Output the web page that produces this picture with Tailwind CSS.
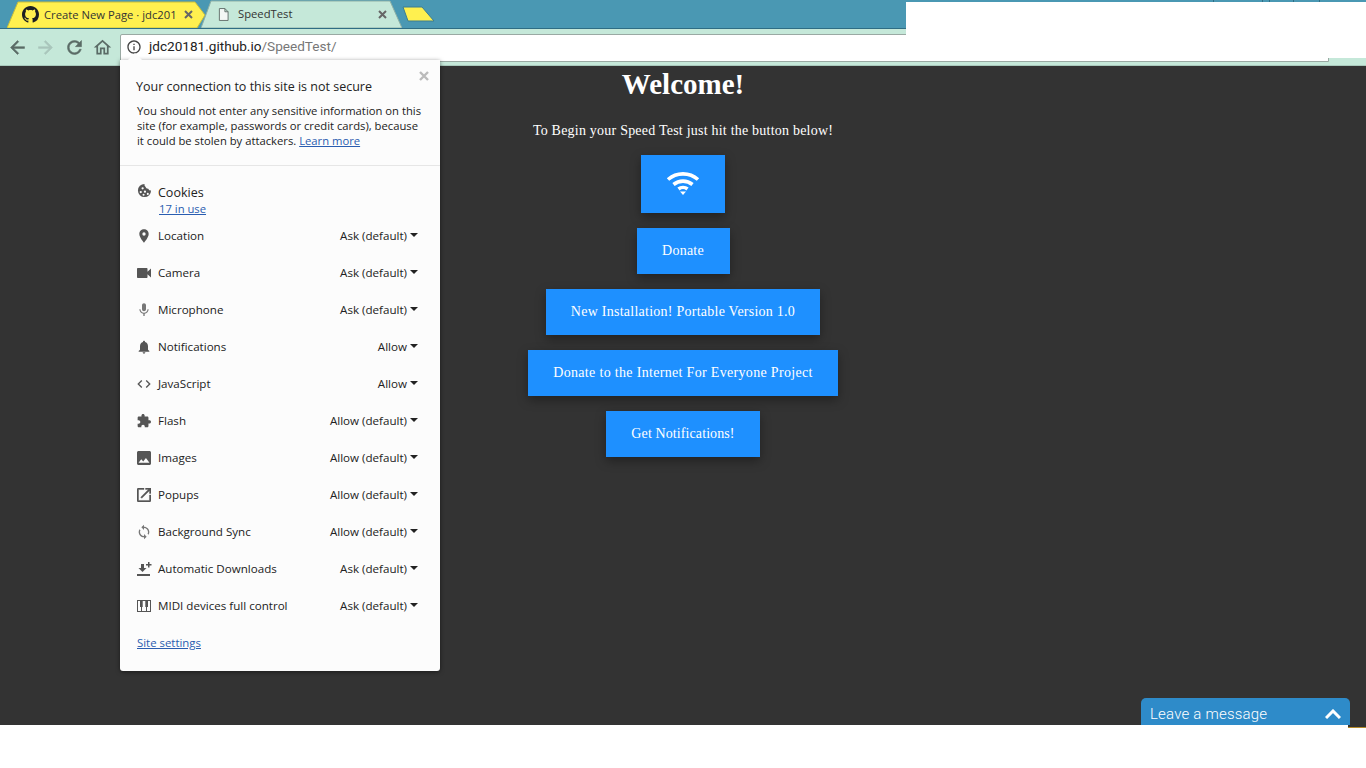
<!DOCTYPE html>
<html lang="en">
<head>
<meta charset="UTF-8">
<title>SpeedTest</title>
<script src="https://cdn.jsdelivr.net/npm/@tailwindcss/browser@4"></script>
</head>
<body class="relative w-[1366px] h-[768px] overflow-hidden bg-white font-['Open_Sans',sans-serif]">

<!-- browser chrome -->
<header class="relative h-[66px] bg-[#c5e8d9] flex flex-col">
  <div class="relative h-[29px] bg-[#4a98b3] border-b border-[#2f6d84] flex items-end pl-[7px]">
    <!-- github tab -->
    <div class="relative w-[198px] h-[27px] flex items-center pl-[15px]">
      <svg class="absolute left-0 top-0" width="198" height="27" viewBox="0 0 198 27"><polygon points="0,27 11,1 188,1 198,14 190,27" fill="#fff04f" stroke="#c7bd3d"/></svg>
      <svg class="relative shrink-0" width="17" height="17" viewBox="0 0 16 16"><path fill="#1b1f23" d="M8 0C3.58 0 0 3.58 0 8c0 3.54 2.29 6.53 5.47 7.59.4.07.55-.17.55-.38 0-.19-.01-.82-.01-1.49-2.01.37-2.53-.49-2.69-.94-.09-.23-.48-.94-.82-1.13-.28-.15-.68-.52-.01-.53.63-.01 1.08.58 1.23.82.72 1.21 1.87.87 2.33.66.07-.52.28-.87.51-1.07-1.78-.2-3.64-.89-3.64-3.95 0-.87.31-1.59.82-2.15-.08-.2-.36-1.02.08-2.12 0 0 .67-.21 2.2.82.64-.18 1.32-.27 2-.27s1.36.09 2 .27c1.53-1.04 2.2-.82 2.2-.82.44 1.1.16 1.92.08 2.12.51.56.82 1.27.82 2.15 0 3.07-1.87 3.75-3.65 3.95.29.25.54.73.54 1.48 0 1.07-.01 1.93-.01 2.2 0 .21.15.46.55.38A8.01 8.01 0 0 0 16 8c0-4.42-3.58-8-8-8z"/></svg>
      <span class="relative ml-[5px] mt-px w-[131px] whitespace-nowrap text-[11.25px] text-[#333]">Create New Page · jdc201</span>
      <svg class="relative ml-[9px]" width="9" height="9" viewBox="0 0 9 9" stroke="#666" stroke-width="2"><path d="M1 1l7 7M8 1l-7 7"/></svg>
    </div>
    <!-- speedtest tab -->
    <div class="relative -ml-[4px] w-[201px] h-[28px] flex items-center pl-[17px]">
      <svg class="absolute left-0 top-0" width="201" height="28" viewBox="0 0 201 28"><polygon points="0,28 10,1 189,1 201,28" fill="#c5e8d9" stroke="#8fb0a6"/></svg>
      <svg class="relative shrink-0" width="11" height="13" viewBox="0 0 12 14"><path d="M1.5.5h6l3.5 3.5v9.5h-9.5zM7.5.5v3.5h3.5" fill="#f3f7f5" stroke="#5f6b68"/></svg>
      <span class="relative ml-[9px] mt-px w-[140px] text-[11.25px] text-[#333]">SpeedTest</span>
      <svg class="relative" width="9" height="9" viewBox="0 0 9 9" stroke="#666" stroke-width="2"><path d="M1 1l7 7M8 1l-7 7"/></svg>
    </div>
    <!-- new tab button -->
    <svg class="mb-[6px]" width="34" height="16" viewBox="0 0 34 16"><polygon points="1,1 20,1 32,15 6,15" fill="#fff04f" stroke="#3a7d92"/></svg>
  </div>

  <div class="flex-1 relative flex items-center pl-[7px]">
    <div class="flex items-center">
      <svg width="21" height="21" viewBox="0 0 24 24"><path fill="#5a6b66" stroke="#5a6b66" stroke-width=".6" d="M20 11H7.83l5.59-5.59L12 4l-8 8 8 8 1.41-1.41L7.83 13H20z"/></svg>
      <svg class="ml-[7px]" width="21" height="21" viewBox="0 0 24 24"><path fill="#a9c6bb" stroke="#a9c6bb" stroke-width=".6" d="M12 4l-1.41 1.41L16.17 11H4v2h12.17l-5.58 5.59L12 20l8-8z"/></svg>
      <svg class="ml-[8px]" width="21" height="21" viewBox="0 0 24 24"><path fill="#5a6b66" stroke="#5a6b66" stroke-width=".6" d="M17.65 6.35C16.2 4.9 14.21 4 12 4c-4.42 0-7.99 3.58-7.99 8s3.57 8 7.99 8c3.73 0 6.84-2.55 7.73-6h-2.08c-.82 2.33-3.04 4-5.65 4-3.31 0-6-2.69-6-6s2.69-6 6-6c1.66 0 3.14.69 4.22 1.78L13 11h7V4l-2.35 2.35z"/></svg>
      <svg class="ml-[7px]" width="21" height="21" viewBox="0 0 24 24"><path fill="#5a6b66" d="M12 5.69l5 4.5V18h-2v-6H9v6H7v-7.81l5-4.5M12 3L2 12h3v8h6v-6h2v6h6v-8h3L12 3z"/></svg>
    </div>
    <div class="ml-[7px] w-[1209px] h-[28px] bg-white border border-[#9aa9a3] rounded-t-[2px] flex items-center pb-[2px] pl-[5px] font-['Roboto',sans-serif] text-[13.6px]">
      <svg width="16" height="16" viewBox="0 0 24 24"><path fill="#444" d="M11 7h2v2h-2zm0 4h2v6h-2zm1-9C6.48 2 2 6.48 2 12s4.48 10 10 10 10-4.48 10-10S17.52 2 12 2zm0 18c-4.41 0-8-3.59-8-8s3.59-8 8-8 8 3.59 8 8-3.59 8-8 8z"/></svg>
      <span class="ml-[7px] text-[#222]">jdc20181.github.io<span class="text-[#777]">/SpeedTest/</span></span>
    </div>
  </div>
  <div class="absolute left-0 right-0 bottom-0 h-px bg-[#a9c9bc]"></div>
  <!-- blanked out area top right -->
  <div class="absolute left-[906px] right-0 top-[2px] h-[56px] bg-white"></div>
  <!-- tops of other windows' tabs peeking above the blank area -->
  <div class="absolute left-[1213px] top-0 h-[2px] flex gap-[6px]">
    <span class="w-[50px] border-x border-[#2f6d84]"></span>
    <span class="w-[25px] border-x border-[#2f6d84]"></span>
    <span class="w-[20px] border-r border-[#2f6d84]"></span>
    <span class="w-[42px] border-r border-[#2f6d84]"></span>
  </div>
</header>

<!-- page -->
<main class="relative h-[659px] bg-[#333333] flex flex-col items-center font-['Liberation_Serif',serif] text-white">
  <h1 class="text-[29px] leading-[36px] font-bold">Welcome!</h1>
  <p class="mt-[18px] text-[14px] leading-[22px] tracking-[0.22px]">To Begin your Speed Test just hit the button below!</p>
  <button class="mt-[13px] w-[84px] h-[58px] pb-[3px] bg-[#1e90ff] flex items-center justify-center shadow-[0_4px_10px_rgba(0,0,0,0.35)]">
    <svg width="34" height="25" viewBox="0 0 34 25" fill="none" stroke="#fff" stroke-width="3.6"><path d="M2 9.5C10.5 2 23.5 2 32 9.5"/><path d="M7.5 14.5C13 10 21 10 26.5 14.5"/><path d="M12.5 19C15 17 19 17 21.5 19"/><polygon points="14,21.5 20,21.5 17,25" fill="#fff" stroke="none"/></svg>
  </button>
  <button class="mt-[15px] w-[93px] h-[46px] pb-[2px] bg-[#1e90ff] text-[14px] tracking-[0.25px] shadow-[0_4px_10px_rgba(0,0,0,0.35)]">Donate</button>
  <button class="mt-[15px] w-[274px] h-[46px] pb-[2px] bg-[#1e90ff] text-[14px] tracking-[0.25px] shadow-[0_4px_10px_rgba(0,0,0,0.35)]">New Installation! Portable Version 1.0</button>
  <button class="mt-[15px] w-[310px] h-[46px] pb-[2px] bg-[#1e90ff] text-[14px] tracking-[0.32px] shadow-[0_4px_10px_rgba(0,0,0,0.35)]">Donate to the Internet For Everyone Project</button>
  <button class="mt-[15px] w-[154px] h-[46px] pb-[2px] bg-[#1e90ff] text-[14px] tracking-[0.1px] shadow-[0_4px_10px_rgba(0,0,0,0.35)]">Get Notifications!</button>

  <!-- chat widget -->
  <div class="absolute left-[1141px] bottom-0 w-[209px] h-[27px] bg-[#2e8bc9] rounded-t-[5px] flex items-center justify-between pt-[5px] pl-[9px] pr-[9px] font-['Roboto',sans-serif] font-light text-[15px] tracking-[0.2px]">
    <span>Leave a message</span>
    <svg width="16" height="10" viewBox="0 0 16 10" fill="none" stroke="#fff" stroke-width="3"><path d="M1 9l7-7 7 7"/></svg>
  </div>
</main>
<div class="absolute left-[1348px] top-[725px] w-[18px] h-[3px] bg-[#333333] border-b border-[#b58a2a]"></div>

<!-- site info popup -->
<section class="absolute left-[120px] top-[60px] w-[320px] h-[611px] bg-[#fcfcfc] rounded-b-[3px] shadow-[0_1px_4px_rgba(0,0,0,0.5)] text-[#222] text-[11.6px] flex flex-col">
  <span class="absolute -top-[5px] left-[10px] w-[10px] h-[10px] rotate-45 bg-[#fcfcfc]"></span>
  <svg class="absolute right-[11px] top-[11px]" width="10" height="10" viewBox="0 0 10 10" stroke="#bbb" stroke-width="2.4"><path d="M1 1l8 8M9 1l-8 8"/></svg>
  <div class="h-[106px] pt-[18px] pl-[16px] pr-[14px] border-b border-[#e6e6e6]">
    <h2 class="text-[12.5px] leading-[18px]">Your connection to this site is not secure</h2>
    <p class="mt-[7px] pl-px text-[11.25px] leading-[15px]">You should not enter any sensitive information on this site (for example, passwords or credit cards), because it could be stolen by attackers. <a class="text-[#2a5db0] underline">Learn more</a></p>
  </div>

  <div class="flex pl-[17px] pt-[18px] h-[51px]">
    <svg class="-mt-[1px] mr-[6px] shrink-0" width="15" height="15" viewBox="0 0 16 16"><path fill="#555" fill-rule="evenodd" d="M8 1a7 7 0 1 0 7 7 3 3 0 0 1-3-2 3 3 0 0 1-3-2 3 3 0 0 1-1-3zM6 4.5a1.2 1.2 0 1 1 0 2.4 1.2 1.2 0 0 1 0-2.4zM4 8.5a1.2 1.2 0 1 1 0 2.4 1.2 1.2 0 0 1 0-2.4zM8.5 8a1.2 1.2 0 1 1 0 2.4 1.2 1.2 0 0 1 0-2.4zM7 11.5a1.1 1.1 0 1 1 0 2.2 1.1 1.1 0 0 1 0-2.2zM11.5 10.5a1.1 1.1 0 1 1 0 2.2 1.1 1.1 0 0 1 0-2.2z"/></svg>
    <div class="leading-[17px]">
      <div class="text-[12.5px]">Cookies</div>
      <a class="block -mt-px ml-px text-[#2a5db0] underline text-[11.25px]">17 in use</a>
    </div>
  </div>

  <ul class="pl-[16px] pr-[22px]">
    <li class="h-[37px] flex items-center">
      <svg class="w-[16px] h-[16px] mr-[6px]" viewBox="0 0 24 24"><path fill="#555" d="M12 2C8.13 2 5 5.13 5 9c0 5.25 7 13 7 13s7-7.75 7-13c0-3.87-3.13-7-7-7zm0 9.5a2.5 2.5 0 0 1 0-5 2.5 2.5 0 0 1 0 5z"/></svg>
      <span>Location</span><span class="ml-auto">Ask (default)</span><span class="ml-[3px] mb-[2px] border-x-[4px] border-x-transparent border-t-[4px] border-t-[#222]"></span>
    </li>
    <li class="h-[37px] flex items-center">
      <svg class="w-[14px] h-[10px] ml-px mr-[7px]" viewBox="2 6 20 12" preserveAspectRatio="none"><path fill="#555" d="M17 10.5V7c0-.55-.45-1-1-1H3c-.55 0-1 .45-1 1v10c0 .55.45 1 1 1h13c.55 0 1-.45 1-1v-3.5l5 4v-11l-5 4z"/></svg>
      <span>Camera</span><span class="ml-auto">Ask (default)</span><span class="ml-[3px] mb-[2px] border-x-[4px] border-x-transparent border-t-[4px] border-t-[#222]"></span>
    </li>
    <li class="h-[37px] flex items-center">
      <svg class="w-[16px] h-[16px] mr-[6px]" viewBox="0 0 24 24"><path fill="#777" d="M12 14c1.66 0 3-1.34 3-3V5c0-1.66-1.34-3-3-3S9 3.34 9 5v6c0 1.66 1.34 3 3 3zm5.3-3c0 3-2.54 5.1-5.3 5.1S6.7 14 6.7 11H5c0 3.41 2.72 6.23 6 6.72V21h2v-3.28c3.28-.48 6-3.3 6-6.72h-1.7z"/></svg>
      <span>Microphone</span><span class="ml-auto">Ask (default)</span><span class="ml-[3px] mb-[2px] border-x-[4px] border-x-transparent border-t-[4px] border-t-[#222]"></span>
    </li>
    <li class="h-[37px] flex items-center">
      <svg class="w-[16px] h-[16px] mr-[6px]" viewBox="0 0 24 24"><path fill="#555" d="M12 22c1.1 0 2-.9 2-2h-4c0 1.1.9 2 2 2zm6-6v-5c0-3.07-1.63-5.64-4.5-6.32V4c0-.83-.67-1.5-1.5-1.5s-1.5.67-1.5 1.5v.68C7.64 5.36 6 7.92 6 11v5l-2 2v1h16v-1l-2-2z"/></svg>
      <span>Notifications</span><span class="ml-auto">Allow</span><span class="ml-[3px] mb-[2px] border-x-[4px] border-x-transparent border-t-[4px] border-t-[#222]"></span>
    </li>
    <li class="h-[37px] flex items-center">
      <svg class="w-[16px] h-[16px] mr-[6px]" viewBox="0 0 24 24"><path fill="#555" d="M9.4 16.6L4.8 12l4.6-4.6L8 6l-6 6 6 6 1.4-1.4zm5.2 0l4.6-4.6-4.6-4.6L16 6l6 6-6 6-1.4-1.4z"/></svg>
      <span>JavaScript</span><span class="ml-auto">Allow</span><span class="ml-[3px] mb-[2px] border-x-[4px] border-x-transparent border-t-[4px] border-t-[#222]"></span>
    </li>
    <li class="h-[37px] flex items-center">
      <svg class="w-[14px] h-[14px] ml-px mr-[7px]" viewBox="1 1 22 22"><path fill="#555" d="M20.5 11H19V7c0-1.1-.9-2-2-2h-4V3.5C13 2.12 11.88 1 10.5 1S8 2.12 8 3.5V5H4c-1.1 0-1.99.9-1.99 2v3.8H3.5c1.49 0 2.7 1.21 2.7 2.7s-1.21 2.7-2.7 2.7H2V20c0 1.1.9 2 2 2h3.8v-1.5c0-1.49 1.21-2.7 2.7-2.7 1.49 0 2.7 1.21 2.7 2.7V22H17c1.1 0 2-.9 2-2v-4h1.5c1.38 0 2.5-1.12 2.5-2.5S21.88 11 20.5 11z"/></svg>
      <span>Flash</span><span class="ml-auto">Allow (default)</span><span class="ml-[3px] mb-[2px] border-x-[4px] border-x-transparent border-t-[4px] border-t-[#222]"></span>
    </li>
    <li class="h-[37px] flex items-center">
      <svg class="w-[14px] h-[14px] ml-px mr-[7px]" viewBox="3 3 18 18"><path fill="#555" d="M21 19V5c0-1.1-.9-2-2-2H5c-1.1 0-2 .9-2 2v14c0 1.1.9 2 2 2h14c1.1 0 2-.9 2-2zM8.5 13.5l2.5 3.01L14.5 12l4.5 6H5l3.5-4.5z"/></svg>
      <span>Images</span><span class="ml-auto">Allow (default)</span><span class="ml-[3px] mb-[2px] border-x-[4px] border-x-transparent border-t-[4px] border-t-[#222]"></span>
    </li>
    <li class="h-[37px] flex items-center">
      <svg class="w-[14px] h-[14px] ml-px mr-[7px]" viewBox="3 3 18 18"><path fill="#555" stroke="#555" stroke-width=".5" d="M19 19H5V5h7V3H5c-1.11 0-2 .9-2 2v14c0 1.1.89 2 2 2h14c1.1 0 2-.9 2-2v-7h-2v7zM14 3v2h3.59l-9.83 9.83 1.41 1.41L19 6.41V10h2V3h-7z"/></svg>
      <span>Popups</span><span class="ml-auto">Allow (default)</span><span class="ml-[3px] mb-[2px] border-x-[4px] border-x-transparent border-t-[4px] border-t-[#222]"></span>
    </li>
    <li class="h-[37px] flex items-center">
      <svg class="w-[16px] h-[16px] mr-[6px]" viewBox="0 0 24 24"><path fill="#777" d="M12 4V1L8 5l4 4V6c3.31 0 6 2.69 6 6 0 1.01-.25 1.97-.7 2.8l1.46 1.46C19.54 15.03 20 13.57 20 12c0-4.42-3.58-8-8-8zm0 14c-3.31 0-6-2.69-6-6 0-1.01.25-1.97.7-2.8L5.24 7.74C4.46 8.97 4 10.43 4 12c0 4.42 3.58 8 8 8v3l4-4-4-4v3z"/></svg>
      <span>Background Sync</span><span class="ml-auto">Allow (default)</span><span class="ml-[3px] mb-[2px] border-x-[4px] border-x-transparent border-t-[4px] border-t-[#222]"></span>
    </li>
    <li class="h-[37px] flex items-center">
      <svg class="w-[16px] h-[16px] mr-[6px]" viewBox="0 0 16 16"><path fill="#555" d="M5 3h3v4h2.5L6.5 11 2.5 7H5zM1 13h13v2H1zM12 1h1.5v2H15.5v1.5H13.5v2H12v-2H10V3h2z"/></svg>
      <span>Automatic Downloads</span><span class="ml-auto">Ask (default)</span><span class="ml-[3px] mb-[2px] border-x-[4px] border-x-transparent border-t-[4px] border-t-[#222]"></span>
    </li>
    <li class="h-[37px] flex items-center">
      <svg class="w-[16px] h-[16px] mr-[6px]" viewBox="0 0 16 16"><path fill="#555" fill-rule="evenodd" d="M1 2h14v12H1zM2 3v10h3V9H4V3zM6 13h4V9H9.3V3H6.7v6H6zM11 13h3V3h-2v6h-1z"/></svg>
      <span>MIDI devices full control</span><span class="ml-auto">Ask (default)</span><span class="ml-[3px] mb-[2px] border-x-[4px] border-x-transparent border-t-[4px] border-t-[#222]"></span>
    </li>
  </ul>

  <a class="mt-[11px] ml-[17px] text-[#2a5db0] underline text-[11.4px] leading-[16px]">Site settings</a>
</section>
</body>
</html>
